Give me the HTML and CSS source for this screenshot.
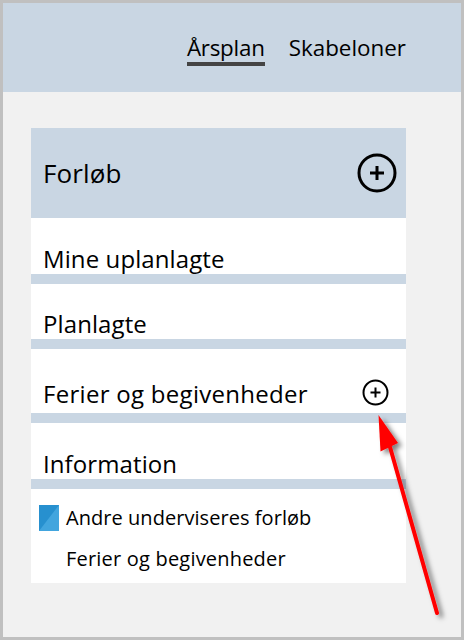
FILE: index.html
```html
<!DOCTYPE html>
<html lang="da">
<head>
    <meta charset="UTF-8">
    <title>Årsplan</title>
    <link rel="stylesheet" href="styles.css">
</head>
<body>
    <div class="frame">
        <div class="topbar">
            <a class="tab active">Årsplan</a>
            <a class="tab">Skabeloner</a>
        </div>
        <div class="panel">
            <div class="panel-head">
                <span>Forløb</span>
                <svg class="plus-big" width="42" height="42" viewBox="0 0 42 42">
                    <circle cx="21" cy="21" r="18" fill="none" stroke="#000" stroke-width="3"/>
                    <path d="M21 14v14M14 21h14" fill="none" stroke="#000" stroke-width="3"/>
                </svg>
            </div>
            <div class="row row-mine">Mine uplanlagte</div>
            <div class="row row-plan">Planlagte</div>
            <div class="row row-ferier">
                <span>Ferier og begivenheder</span>
                <svg class="plus-small" width="27" height="27" viewBox="0 0 27 27">
                    <circle cx="13.5" cy="13.5" r="12" fill="none" stroke="#000" stroke-width="2"/>
                    <path d="M13.500 8.500v10M8.500 13.500h10" fill="none" stroke="#000" stroke-width="2"/>
                </svg>
            </div>
            <div class="row row-info">Information</div>
            <div class="sublist">
                <div class="subitem">
                    <svg class="swatch" width="20" height="26" viewBox="0 0 20 26">
                        <rect width="20" height="26" fill="#42a5de"/>
                        <path d="M0 0h20L0 26z" fill="#2790cf"/>
                    </svg>
                    <span>Andre underviseres forløb</span>
                </div>
                <div class="subitem plain">Ferier og begivenheder</div>
            </div>
        </div>
    </div>

    <!-- red annotation arrow on top of the screenshot -->
    <svg class="arrow" width="464" height="640" viewBox="0 0 464 640">
        <defs>
            <filter id="arrowShadow" x="-30%" y="-10%" width="170%" height="125%">
                <feDropShadow dx="4" dy="3" stdDeviation="2.5" flood-color="#000" flood-opacity="0.5"/>
            </filter>
        </defs>
        <g filter="url(#arrowShadow)">
            <path d="M437 613L390 447" fill="none" stroke="#f00" stroke-width="4" stroke-linecap="round"/>
            <path d="M378.500 415L398 443L380.500 451.500z" fill="#f00"/>
        </g>
    </svg>
</body>
</html>
```

FILE: styles.css
```css
html, body {
    margin: 0;
    padding: 0;
}
body {
    width: 464px;
    height: 640px;
    overflow: hidden;
    position: relative;
    font-family: "Open Sans", "Noto Sans", sans-serif;
    color: #000;
}
.frame {
    box-sizing: border-box;
    width: 464px;
    height: 640px;
    border: 3px solid #c0c0c0;
    background-color: #f1f1f1;
}
.topbar {
    height: 89px;
    background-color: #c9d6e3;
    display: flex;
    justify-content: flex-end;
    align-items: flex-start;
    gap: 24px;
    padding: 30px 55px 0 0;
    box-sizing: border-box;
}
.tab {
    font-size: 22.4px;
    line-height: 29px;
    height: 29px;
}
.tab.active {
    border-bottom: 4px solid #444;
    letter-spacing: -0.25px;
}
.panel {
    width: 375px;
    margin: 36px 0 0 28px;
    background-color: white;
}
.panel-head {
    height: 90px;
    background-color: #c9d6e3;
    display: flex;
    justify-content: space-between;
    align-items: center;
    padding: 0 8px 0 12px;
    font-size: 26px;
    letter-spacing: 0.1px;
}
.row {
    box-sizing: border-box;
    display: flex;
    justify-content: space-between;
    align-items: flex-end;
    padding: 0 17px 0 12px;
    border-bottom: 10px solid #c9d6e3;
    font-size: 24px;
    line-height: 30px;
    letter-spacing: 0.1px;
}
.row-mine {
    height: 66px;
}
.row-plan {
    height: 65px;
}
.row-ferier {
    height: 74px;
    padding-bottom: 4px;
    letter-spacing: 0.29px;
}
.row-info {
    height: 66px;
}
.plus-small {
    margin-bottom: 3px;
}
.sublist {
    padding: 8px 0 4px 8px;
}
.subitem {
    display: flex;
    align-items: center;
    gap: 7px;
    height: 41px;
    font-size: 20px;
    letter-spacing: 0.05px;
}
.subitem.plain {
    padding-left: 27px;
    letter-spacing: 0.2px;
}
.arrow {
    position: absolute;
    left: 0;
    top: 0;
}
```
